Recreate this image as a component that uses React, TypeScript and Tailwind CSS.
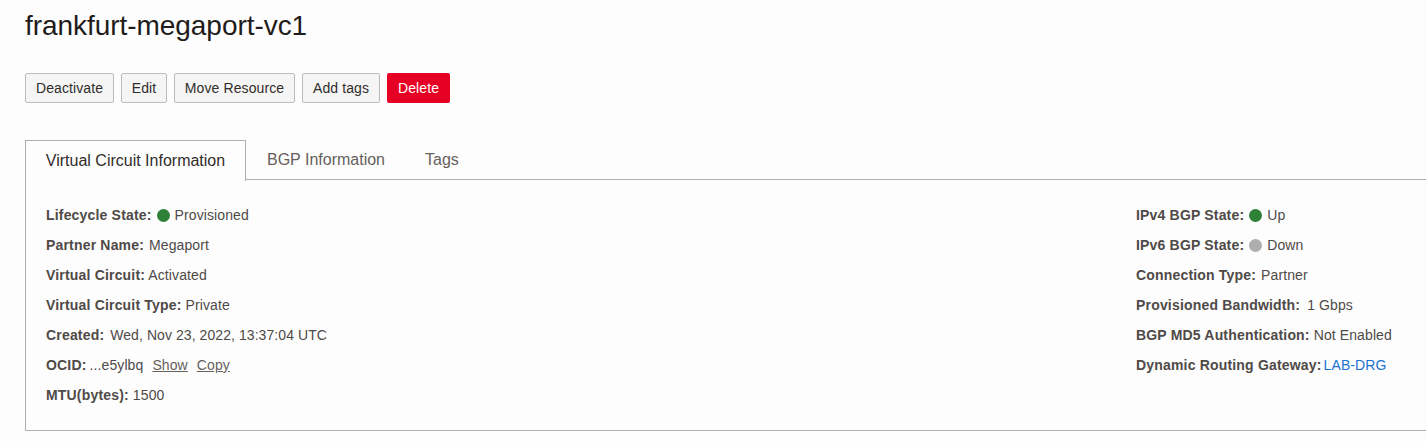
const leftRows = [
  { label: 'Partner Name:', value: 'Megaport', cls: 'ml-px' },
  { label: 'Virtual Circuit:', value: 'Activated', cls: '' },
  { label: 'Virtual Circuit Type:', value: 'Private', cls: '' },
  { label: 'Created:', value: 'Wed, Nov 23, 2022, 13:37:04 UTC', cls: 'ml-[2px] tracking-[0.07px]' },
];

const rightRows = [
  { label: 'Connection Type:', value: 'Partner', cls: 'ml-px' },
  { label: 'Provisioned Bandwidth:', value: '1 Gbps', cls: 'ml-[3px]' },
  { label: 'BGP MD5 Authentication:', value: 'Not Enabled', cls: '' },
];

function Row({ children }: { children: React.ReactNode }) {
  return <div className="h-[30px] leading-[30px] whitespace-pre tracking-[0.1px]">{children}</div>;
}

function Label({ children }: { children: React.ReactNode }) {
  return <span className="font-bold tracking-[0.18px]">{children}</span>;
}

function Dot({ color }: { color: string }) {
  return <span className={`inline-block align-[-2px] w-[13px] h-[13px] rounded-full mx-[5px] ${color}`} />;
}

function ActionButton({ width, children }: { width: string; children: React.ReactNode }) {
  return (
    <button className={`h-[30px] ${width} text-[14px] tracking-[0.1px] text-[#312d2a] bg-[#f5f5f6] border border-[#bcbcc0] rounded-[2px]`}>
      {children}
    </button>
  );
}

export default function App() {
  return (
    <div className="h-[441px] overflow-hidden bg-[#fdfdfe] pl-[25px] font-['Liberation_Sans',Arial,sans-serif] text-[14px] text-[#4f4a47]">
      <h1 className="pt-[8px] h-[73px] text-[28px] leading-[36px] tracking-[-0.05px] text-[#1f1c1a]">frankfurt-megaport-vc1</h1>

      <div className="flex gap-[7px]">
        <ActionButton width="w-[89px]">Deactivate</ActionButton>
        <ActionButton width="w-[46px]">Edit</ActionButton>
        <ActionButton width="w-[121px]">Move Resource</ActionButton>
        <ActionButton width="w-[78px]">Add tags</ActionButton>
        <button className="h-[30px] w-[63px] text-[14px] tracking-[0.1px] text-white bg-[#e60023] rounded-[2px]">Delete</button>
      </div>

      <div className="flex mt-[37px] h-[41px] text-[16px] text-[#665f5b]">
        <div className="w-[221px] h-[41px] border border-b-0 border-[#aeaeb0] bg-[#fdfdfe] flex items-center justify-center text-[#312d2a] relative z-10">
          Virtual Circuit Information
        </div>
        <div className="flex-1 flex items-center border-b border-[#aeaeb0] h-[40px] pl-[21px] gap-[40px]">
          <span>BGP Information</span>
          <span>Tags</span>
        </div>
      </div>

      <div className="h-[251px] -mt-px border-l border-b border-[#aeaeb0] pl-[20px] pt-[20px] flex">
        <div className="w-[1090px]">
          <Row>
            <Label>Lifecycle State:</Label>
            <Dot color="bg-[#2e8137]" />
            <span>Provisioned</span>
          </Row>
          {leftRows.map((r) => (
            <Row key={r.label}>
              <Label>{r.label}</Label> <span className={r.cls}>{r.value}</span>
            </Row>
          ))}
          <Row>
            <Label>OCID:</Label> <span className="-ml-px">...e5ylbq</span>
            <a className="underline text-[#665f5b] ml-[9px]">Show</a>
            <a className="underline text-[#665f5b] ml-[9px]">Copy</a>
          </Row>
          <Row>
            <Label>MTU(bytes):</Label> 1500
          </Row>
        </div>
        <div>
          <Row>
            <Label>IPv4 BGP State:</Label>
            <Dot color="bg-[#2e8137]" />
            <span>Up</span>
          </Row>
          <Row>
            <Label>IPv6 BGP State:</Label>
            <Dot color="bg-[#aeaeae]" />
            <span>Down</span>
          </Row>
          {rightRows.map((r) => (
            <Row key={r.label}>
              <Label>{r.label}</Label> <span className={r.cls}>{r.value}</span>
            </Row>
          ))}
          <Row>
            <Label>Dynamic Routing Gateway:</Label> <a className="-ml-[2px] text-[#1a73d1]">LAB-DRG</a>
          </Row>
        </div>
      </div>
    </div>
  );
}
